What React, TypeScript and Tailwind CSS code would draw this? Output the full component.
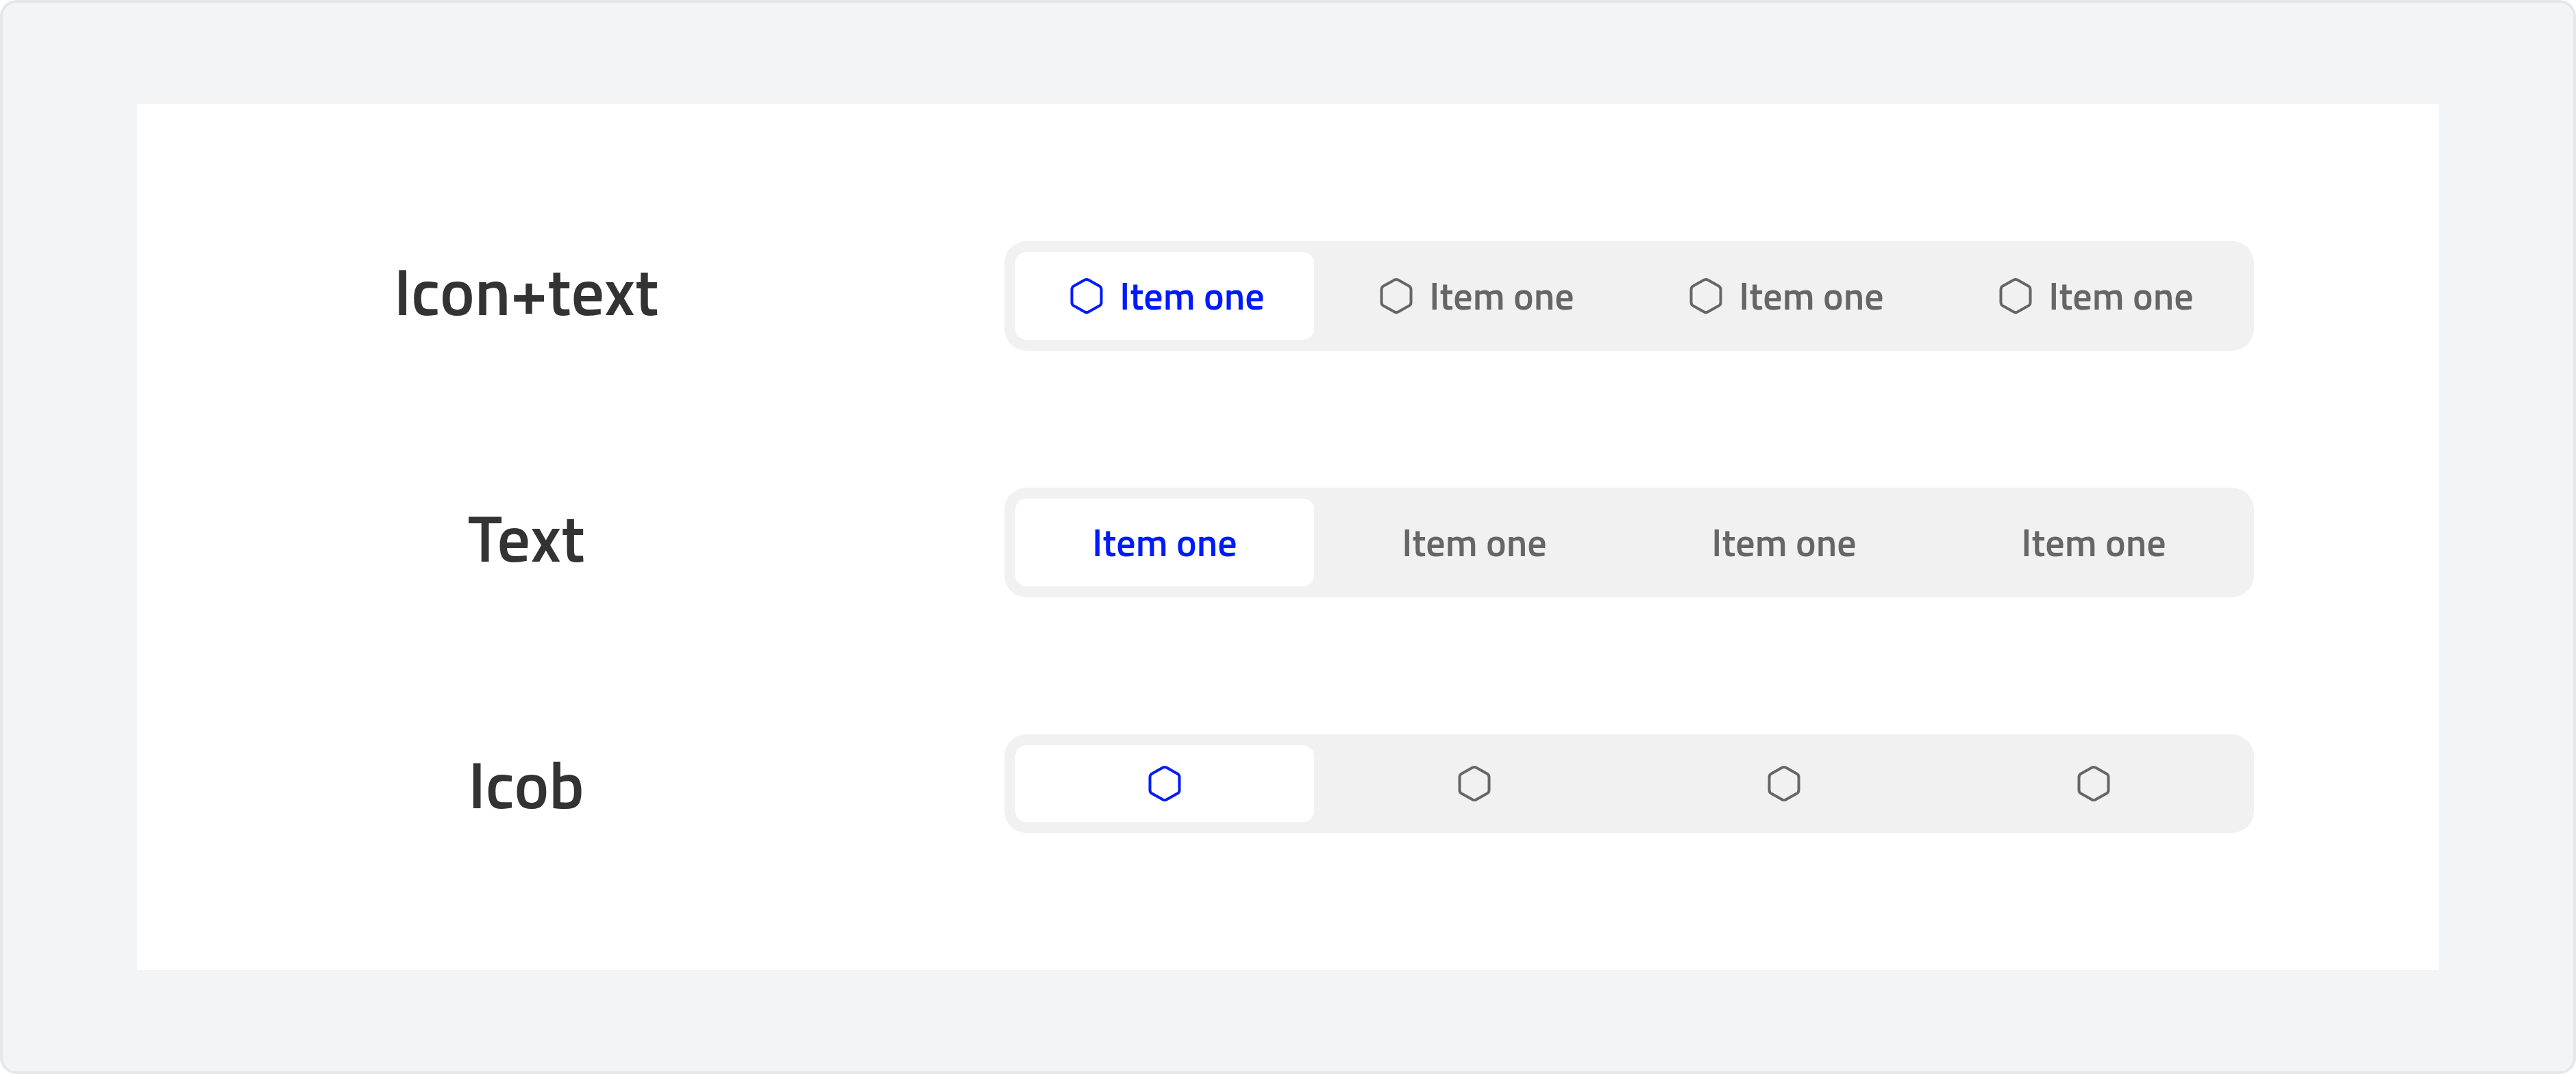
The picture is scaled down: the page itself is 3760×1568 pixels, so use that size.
import { useState } from "react";

type Variant = "icon-text" | "text" | "icon";

const items = ["Item one", "Item one", "Item one", "Item one"];

const rows: { label: string; variant: Variant }[] = [
  { label: "Icon+text", variant: "icon-text" },
  { label: "Text", variant: "text" },
  { label: "Icob", variant: "icon" },
];

function HexagonIcon() {
  return (
    <svg
      viewBox="0 0 64 64"
      className="size-16 shrink-0"
      fill="none"
      stroke="currentColor"
      strokeWidth="4"
      strokeLinejoin="round"
      aria-hidden="true"
    >
      <path d="M29.5 8.6Q32 7.3 34.5 8.6L50.5 17.4Q53.5 19.2 53.5 22.6V41.4Q53.5 44.8 50.5 46.6L34.5 55.4Q32 56.7 29.5 55.4L13.5 46.6Q10.5 44.8 10.5 41.4V22.6Q10.5 19.2 13.5 17.4Z" />
    </svg>
  );
}

function SegmentedControl({ label, variant }: { label: string; variant: Variant }) {
  const [selected, setSelected] = useState(0);
  return (
    <div
      role="group"
      aria-label={label}
      className="grid w-full max-w-[1824px] grid-cols-4 gap-4 rounded-[32px] bg-[#f1f1f1] p-4"
    >
      {items.map((item, index) => (
        <button
          key={index}
          type="button"
          aria-pressed={index === selected}
          aria-label={variant === "icon" ? item : undefined}
          onClick={() => setSelected(index)}
          className={`flex items-center justify-center gap-4 rounded-2xl py-6 ${
            index === selected ? "bg-white text-[#001aff]" : "text-[#666666]"
          }`}
        >
          {variant !== "text" && <HexagonIcon />}
          {variant !== "icon" && (
            <span className="text-[56px] leading-[80px] font-semibold whitespace-nowrap">{item}</span>
          )}
        </button>
      ))}
    </div>
  );
}

export default function App() {
  return (
    <main className="min-h-screen rounded-3xl border-4 border-gray-200 bg-gray-100 px-[196px] py-[148px] font-['Titillium_Web',Roboto,sans-serif]">
      <div className="flex flex-col gap-[200px] bg-white p-[200px]">
        {rows.map(({ label, variant }) => (
          <section key={label} className="flex items-start gap-[260px]">
            <h2 className="w-[736px] shrink-0 text-center text-8xl leading-[144px] font-semibold text-[#333333]">
              {label}
            </h2>
            <div className="flex flex-1 justify-center">
              <SegmentedControl label={label} variant={variant} />
            </div>
          </section>
        ))}
      </div>
    </main>
  );
}
